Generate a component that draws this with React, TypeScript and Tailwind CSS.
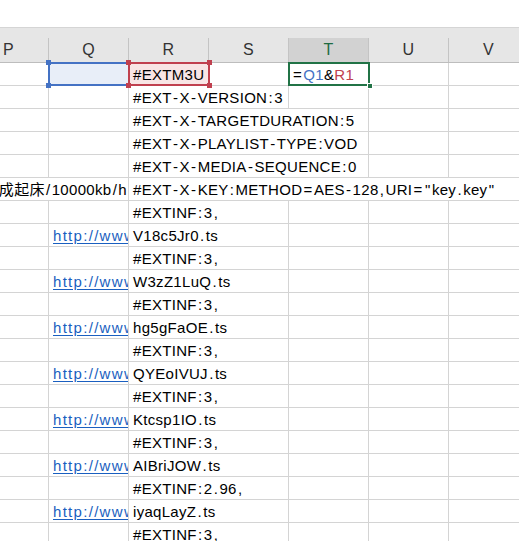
import React from "react"

type Row = {
  q?: "link" | "note"
  r: string
  span: number
}

const rows: Row[] = [
  { r: "#EXTM3U", span: 1 },
  { r: "#EXT-X-VERSION:3", span: 2 },
  { r: "#EXT-X-TARGETDURATION:5", span: 3 },
  { r: "#EXT-X-PLAYLIST-TYPE:VOD", span: 3 },
  { r: "#EXT-X-MEDIA-SEQUENCE:0", span: 3 },
  { q: "note", r: '#EXT-X-KEY:METHOD=AES-128,URI="key.key"', span: 5 },
  { r: "#EXTINF:3,", span: 2 },
  { q: "link", r: "V18c5Jr0.ts", span: 2 },
  { r: "#EXTINF:3,", span: 2 },
  { q: "link", r: "W3zZ1LuQ.ts", span: 2 },
  { r: "#EXTINF:3,", span: 2 },
  { q: "link", r: "hg5gFaOE.ts", span: 2 },
  { r: "#EXTINF:3,", span: 2 },
  { q: "link", r: "QYEoIVUJ.ts", span: 2 },
  { r: "#EXTINF:3,", span: 2 },
  { q: "link", r: "Ktcsp1IO.ts", span: 2 },
  { r: "#EXTINF:3,", span: 2 },
  { q: "link", r: "AIBriJOW.ts", span: 2 },
  { r: "#EXTINF:2.96,", span: 2 },
  { q: "link", r: "iyaqLayZ.ts", span: 2 },
  { r: "#EXTINF:3,", span: 2 },
]

const spanWidth: Record<number, string> = {
  1: "w-[80px]",
  2: "w-[160px]",
  3: "w-[240px]",
  5: "w-[400px]",
}

const columns = ["P", "Q", "R", "S", "T", "U", "V"]

const cell = "h-full shrink-0 border-r border-[#d4d4d4] flex items-end overflow-hidden whitespace-nowrap"

// the sheet font draws punctuation wider than Arial does, so pad it a little
function Txt({ children }: { children: string }) {
  const parts = children.split(/([-:=,"./])/)
  return (
    <>
      {parts.map((p, i) =>
        i % 2 === 1 ? (
          <span key={i} className="mx-[1.25px]">
            {p}
          </span>
        ) : (
          p
        )
      )}
    </>
  )
}

function Handle({ pos, color }: { pos: string; color: string }) {
  return <span className={`absolute w-[5px] h-[5px] ${pos} ${color}`} />
}

function FirstRow() {
  return (
    <div className="flex h-[23px] border-b border-[#d4d4d4]">
      <div className={`${cell} w-[80px]`} />
      {/* Q1 - blue reference range */}
      <div className="relative h-full w-[80px] shrink-0 bg-[#e8eef8]">
        <div className="absolute inset-[-1px] border-2 border-[#4472c4]" />
        <Handle pos="left-[-3px] top-[-3px]" color="bg-[#4472c4]" />
        <Handle pos="left-[-3px] bottom-[-3px]" color="bg-[#4472c4]" />
      </div>
      {/* R1 - red reference range */}
      <div className="relative h-full w-[80px] shrink-0 bg-[#f8e5e5] flex items-end whitespace-nowrap">
        <span className="pl-[4px] pb-[1px] leading-[18px]">#EXTM3U</span>
        <div className="absolute inset-[-1px] border-2 border-[#c0404f]" />
        <Handle pos="left-[-3px] top-[-3px]" color="bg-[#c0404f]" />
        <Handle pos="right-[-3px] top-[-3px]" color="bg-[#c0404f]" />
        <Handle pos="left-[-3px] bottom-[-3px]" color="bg-[#c0404f]" />
        <Handle pos="right-[-3px] bottom-[-3px]" color="bg-[#c0404f]" />
      </div>
      <div className={`${cell} w-[80px]`} />
      {/* T1 - active cell */}
      <div className="relative h-full w-[80px] shrink-0 flex items-end whitespace-nowrap">
        <span className="pl-[4px] pb-[1px] leading-[18px]">
          <span className="mr-[1.25px]">=</span>
          <span className="text-[#4472c4]">Q1</span>&amp;<span className="text-[#c0404f]">R1</span>
        </span>
        <div className="absolute inset-[-1px] border-2 border-[#217346]" />
        <span className="absolute right-[-4px] bottom-[-4px] w-[6px] h-[6px] bg-[#217346] border border-white" />
      </div>
      <div className={`${cell} w-[80px]`} />
      <div className={`${cell} w-[80px]`} />
    </div>
  )
}

function DataRow({ row }: { row: Row }) {
  const rest = 7 - 2 - row.span
  return (
    <div className="flex h-[23px] border-b border-[#d4d4d4]">
      {row.q === "note" ? (
        <div className={`${cell} w-[160px] justify-end`}>
          <span className="pr-[1px] pb-[1px] leading-[18px]">
            <Txt>完成起床/10000kb/h</Txt>
          </span>
        </div>
      ) : (
        <>
          <div className={`${cell} w-[80px]`} />
          <div className={`${cell} w-[80px]`}>
            {row.q === "link" && (
              <span className="block w-full overflow-hidden pl-[4px] pb-[1px] leading-[18px] tracking-[1.3px] text-[#1a5fc0] underline underline-offset-[2px]">
                http://www
              </span>
            )}
          </div>
        </>
      )}
      <div className={`${cell} ${spanWidth[row.span]}`}>
        <span className="pl-[4px] pb-[1px] leading-[18px]">
          <Txt>{row.r}</Txt>
        </span>
      </div>
      {Array.from({ length: rest }).map((_, i) => (
        <div key={i} className={`${cell} w-[80px]`} />
      ))}
    </div>
  )
}

export default function App() {
  return (
    <div className="w-[519px] h-[541px] overflow-hidden bg-white text-[15px] tracking-[0.3px] text-black font-['Liberation_Sans','Noto_Sans_CJK_SC',sans-serif]">
      <div className="h-[28px] border-b border-[#d5d5d5] bg-white" />
      <div className="ml-[-31px] w-[560px]">
        {/* Column headers */}
        <div className="h-[35px] bg-[#e6e6e6] border-b border-[#bdbdbd] flex flex-col">
          <div className="h-[12px]" />
          <div className="flex flex-1">
            {columns.map((c) => (
              <div
                key={c}
                className={`w-[80px] shrink-0 h-full border-r border-[#c4c4c4] flex items-center justify-center text-[16px] ${
                  c === "T" ? "bg-[#d2d2d2] text-[#1e6b41]" : "text-[#333]"
                }`}
              >
                {c}
              </div>
            ))}
          </div>
        </div>

        <FirstRow />
        {rows.slice(1).map((row, i) => (
          <DataRow key={i} row={row} />
        ))}
      </div>
    </div>
  )
}
